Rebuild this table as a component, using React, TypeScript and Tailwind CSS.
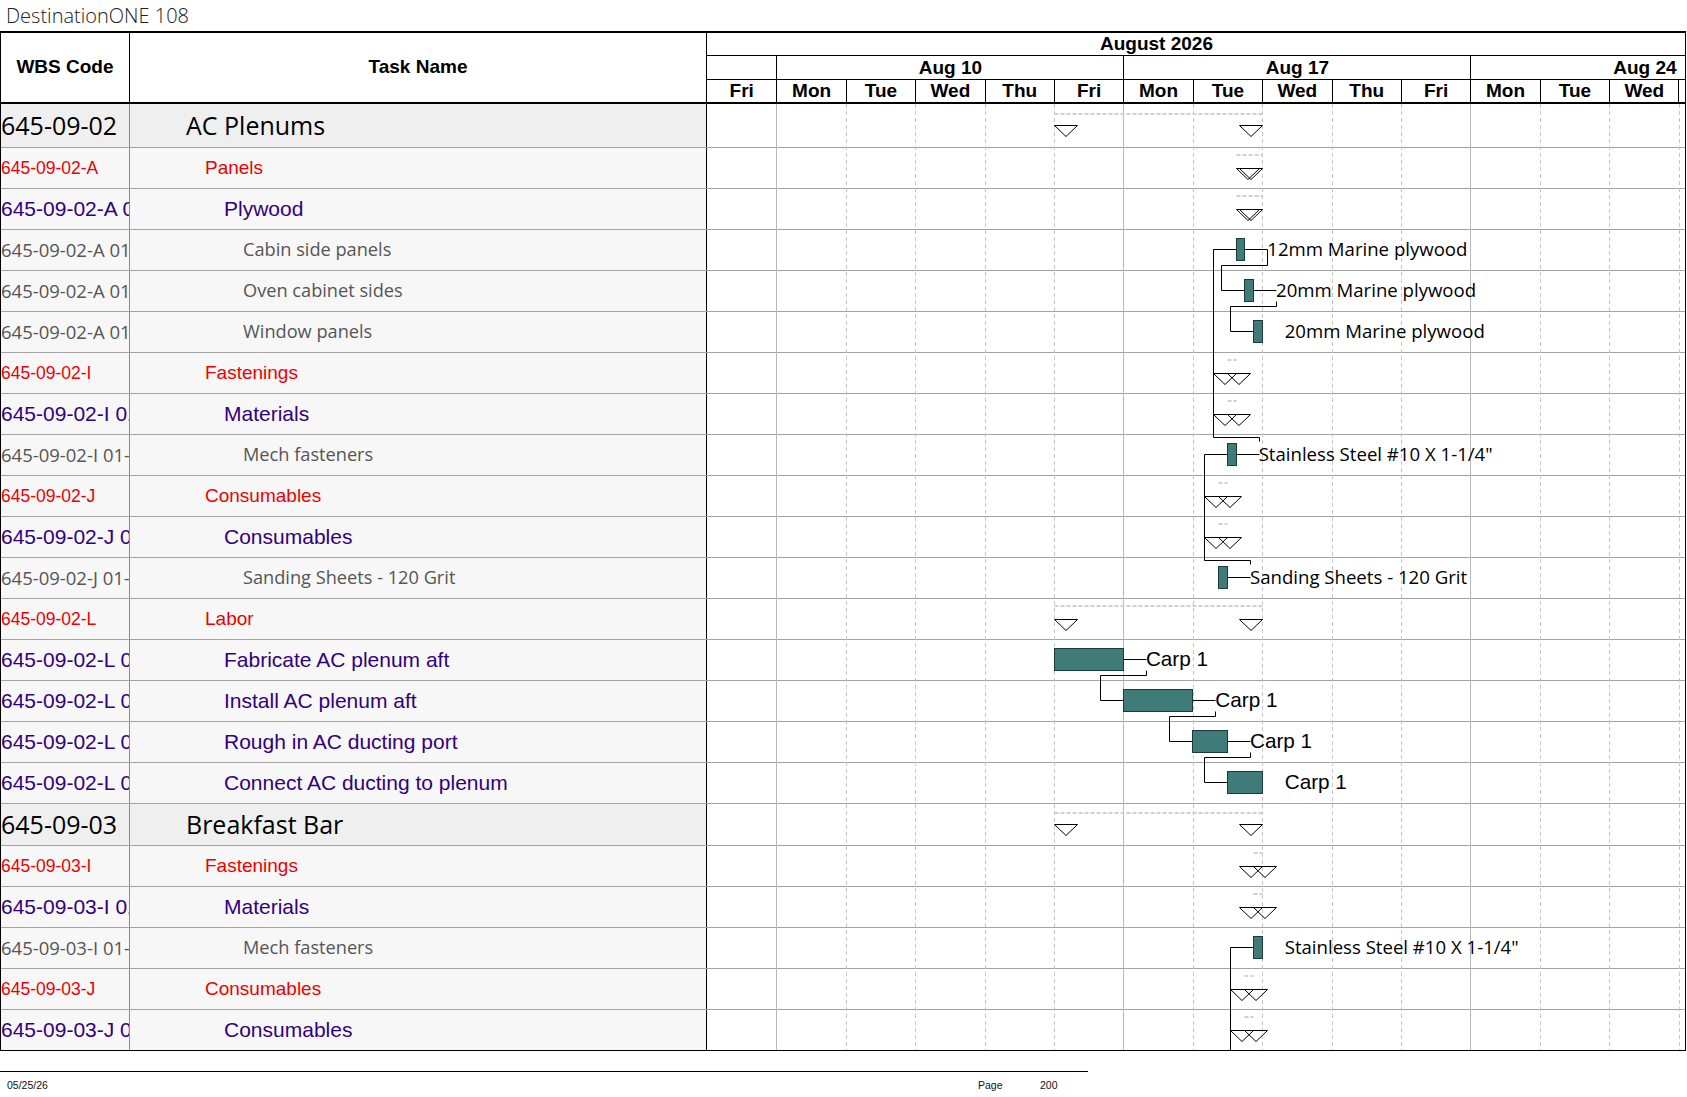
import React from 'react';

const D = 69.4;
const X = (k: number) => 706.5 + D * k;

type Kind = 'group' | 'red' | 'purple' | 'gray';
const ROWS: [string, string, Kind][] = [
  ['645-09-02', 'AC Plenums', 'group'],
  ['645-09-02-A', 'Panels', 'red'],
  ['645-09-02-A 01', 'Plywood', 'purple'],
  ['645-09-02-A 01-01', 'Cabin side panels', 'gray'],
  ['645-09-02-A 01-02', 'Oven cabinet sides', 'gray'],
  ['645-09-02-A 01-03', 'Window panels', 'gray'],
  ['645-09-02-I', 'Fastenings', 'red'],
  ['645-09-02-I 01', 'Materials', 'purple'],
  ['645-09-02-I 01-01', 'Mech fasteners', 'gray'],
  ['645-09-02-J', 'Consumables', 'red'],
  ['645-09-02-J 01', 'Consumables', 'purple'],
  ['645-09-02-J 01-01', 'Sanding Sheets - 120 Grit', 'gray'],
  ['645-09-02-L', 'Labor', 'red'],
  ['645-09-02-L 01', 'Fabricate AC plenum aft', 'purple'],
  ['645-09-02-L 02', 'Install AC plenum aft', 'purple'],
  ['645-09-02-L 03', 'Rough in AC ducting port', 'purple'],
  ['645-09-02-L 04', 'Connect AC ducting to plenum', 'purple'],
  ['645-09-03', 'Breakfast Bar', 'group'],
  ['645-09-03-I', 'Fastenings', 'red'],
  ['645-09-03-I 01', 'Materials', 'purple'],
  ['645-09-03-I 01-01', 'Mech fasteners', 'gray'],
  ['645-09-03-J', 'Consumables', 'red'],
  ['645-09-03-J 01', 'Consumables', 'purple'],
];

const WBS_CLS: Record<Kind, string> = {
  group: "font-['Open_Sans',sans-serif] text-[25px] text-black bg-[#efefef]",
  red: "font-['Liberation_Sans',Arial,sans-serif] text-[17.5px] text-[#ee0000] bg-[#f7f7f7]",
  purple: "font-['Liberation_Sans',Arial,sans-serif] text-[21px] text-[#330080] bg-[#f7f7f7]",
  gray: "font-['Open_Sans',sans-serif] text-[18.5px] text-[#555555] bg-[#f7f7f7]",
};
const TASK_CLS: Record<Kind, string> = {
  group: "font-['Open_Sans',sans-serif] text-[25px] text-black bg-[#efefef] pl-[56px]",
  red: "font-['Liberation_Sans',Arial,sans-serif] text-[19px] text-[#ee0000] bg-[#f7f7f7] pl-[75px]",
  purple: "font-['Liberation_Sans',Arial,sans-serif] text-[21px] text-[#330080] bg-[#f7f7f7] pl-[94px]",
  gray: "font-['Open_Sans',sans-serif] text-[18.2px] text-[#555555] bg-[#f7f7f7] pl-[113px]",
};

const rowTop = (i: number) =>
  i === 0 ? 104 : i <= 16 ? 147 + 41 * (i - 1) : i === 17 ? 803 : 845 + 41 * (i - 18);
const cy = (i: number) => rowTop(i) + 20;
const r = (v: number) => Math.round(v) + 0.5;

const DAYS = ['Fri', 'Mon', 'Tue', 'Wed', 'Thu', 'Fri', 'Mon', 'Tue', 'Wed', 'Thu', 'Fri', 'Mon', 'Tue', 'Wed'];

const BARS: [number, number, number][] = [
  [3, 7.625, 7.75],
  [4, 7.75, 7.875],
  [5, 7.875, 8],
  [8, 7.5, 7.625],
  [11, 7.375, 7.5],
  [13, 5, 6],
  [14, 6, 7],
  [15, 7, 7.5],
  [16, 7.5, 8],
  [20, 7.875, 8],
];

const LABELS: [number, number, string, 'os' | 'ar'][] = [
  [3, 7.75, '12mm Marine plywood', 'os'],
  [4, 7.875, '20mm Marine plywood', 'os'],
  [5, 8, '20mm Marine plywood', 'os'],
  [8, 7.625, 'Stainless Steel #10 X 1-1/4"', 'os'],
  [11, 7.5, 'Sanding Sheets - 120 Grit', 'os'],
  [13, 6, 'Carp 1', 'ar'],
  [14, 7, 'Carp 1', 'ar'],
  [15, 7.5, 'Carp 1', 'ar'],
  [16, 8, 'Carp 1', 'ar'],
  [20, 8, 'Stainless Steel #10 X 1-1/4"', 'os'],
];

const SUMS: [number, number, number][] = [
  [0, 5, 8],
  [1, 7.625, 8],
  [2, 7.625, 8],
  [6, 7.5, 7.625],
  [7, 7.5, 7.625],
  [9, 7.375, 7.5],
  [10, 7.375, 7.5],
  [12, 5, 8],
  [17, 5, 8],
  [18, 7.875, 8],
  [19, 7.875, 8],
  [21, 7.75, 7.875],
  [22, 7.75, 7.875],
];

function Poly({ pts }: { pts: [number, number][] }) {
  return (
    <polyline
      points={pts.map(([x, y]) => `${r(x)},${r(y)}`).join(' ')}
      fill="none"
      stroke="#000"
      strokeWidth={1}
    />
  );
}

function Gantt() {
  const barOf = (row: number) => BARS.find((b) => b[0] === row)!;
  const links: React.ReactNode[] = [];
  const down: [number, number][] = [
    [3, 4],
    [4, 5],
    [13, 14],
    [14, 15],
    [15, 16],
  ];
  down.forEach(([p, q], idx) => {
    const xe = X(barOf(p)[2]);
    const xs = X(barOf(q)[1]);
    const lx = xe + 23;
    const t = rowTop(p);
    links.push(<Poly key={`d1${idx}`} pts={[[xe, cy(p)], [lx, cy(p)]]} />);
    links.push(
      <Poly
        key={`d2${idx}`}
        pts={[
          [lx, p === 3 ? cy(p) : t + 31],
          [lx, t + 36],
          [xs - 23, t + 36],
          [xs - 23, cy(q)],
          [xs, cy(q)],
        ]}
      />
    );
  });
  const up: [number, number][] = [
    [8, 3],
    [11, 8],
  ];
  up.forEach(([p, q], idx) => {
    const xe = X(barOf(p)[2]);
    const xs = X(barOf(q)[1]);
    const lx = xe + 23;
    const t = rowTop(p);
    links.push(<Poly key={`u1${idx}`} pts={[[xe, cy(p)], [lx, cy(p)]]} />);
    links.push(
      <Poly
        key={`u2${idx}`}
        pts={[
          [lx, t + 7],
          [lx, t + 3],
          [xs - 23, t + 3],
          [xs - 23, cy(q)],
          [xs, cy(q)],
        ]}
      />
    );
  });
  const xs20 = X(7.875);
  links.push(
    <Poly key="in20" pts={[[xs20 - 23, 1050], [xs20 - 23, cy(20)], [xs20, cy(20)]]} />
  );

  return (
    <svg
      className="absolute left-[706px] top-0 pointer-events-none"
      width={978}
      height={946}
      viewBox="707 104 978 946"
    >
      {Array.from({ length: 14 }, (_, i) => i + 1).map((k) => {
        const x = r(X(k) + 0.5);
        const mon = k === 1 || k === 6 || k === 11;
        return (
          <line
            key={k}
            x1={x}
            x2={x}
            y1={104}
            y2={1050}
            stroke={mon ? '#b8b8b8' : '#c6c6c6'}
            strokeWidth={1}
            strokeDasharray={mon ? undefined : '4 3'}
          />
        );
      })}
      {SUMS.map(([row, ks, ke]) => {
        const t = rowTop(row);
        const s = Math.round(X(ks)) + 0.5;
        const e = Math.round(X(ke)) + 0.5;
        const dy = row === 0 || row === 17 ? t + 10 : t + 8;
        const ty = t + 21.5;
        return (
          <g key={`s${row}`}>
            <line x1={s} x2={e} y1={dy} y2={dy} stroke="#d0d0d0" strokeWidth={2} strokeDasharray="4 2" />
            <polygon
              points={`${s},${ty} ${s + 23},${ty} ${s + 11.5},${ty + 11}`}
              fill="none"
              stroke="#000"
              strokeWidth={1}
            />
            <polygon
              points={`${e - 23},${ty} ${e},${ty} ${e - 11.5},${ty + 11}`}
              fill="none"
              stroke="#000"
              strokeWidth={1}
            />
          </g>
        );
      })}
      {links}
      {BARS.map(([row, ks, ke]) => {
        const x1 = Math.round(X(ks));
        const x2 = Math.round(X(ke));
        return (
          <rect
            key={`b${row}`}
            x={x1 + 0.5}
            y={rowTop(row) + 9.5}
            width={x2 - x1}
            height={22}
            fill="#3e7b79"
            stroke="#1d3a3a"
            strokeWidth={1}
          />
        );
      })}
      {LABELS.map(([row, ke, text, f]) => (
        <text
          key={`l${row}`}
          x={X(ke) + 23}
          y={cy(row) + 7}
          fontSize={f === 'os' ? 18.6 : 20.7}
          fill="#000"
          style={{
            fontFamily: f === 'os' ? "'Open Sans', sans-serif" : "'Liberation Sans', Arial, sans-serif",
          }}
        >
          {text}
        </text>
      ))}
    </svg>
  );
}

export default function App() {
  return (
    <div className="w-[1687px] h-[1097px] bg-white overflow-hidden relative font-['Liberation_Sans',Arial,sans-serif]">
      <div className="h-[31px] pl-[6px] flex items-center font-['Open_Sans',sans-serif] font-light text-[20px] text-[#222]">
        DestinationONE 108
      </div>
      <div className="w-[1686px] border-t-2 border-l border-r border-b border-black">
        {/* Header */}
        <div className="flex h-[71px]">
          <div className="w-[129px] border-r border-b-2 border-black flex items-center justify-center font-bold text-[19px] text-black">
            WBS Code
          </div>
          <div className="w-[577px] border-r border-b-2 border-black flex items-center justify-center font-bold text-[19px] text-black">
            Task Name
          </div>
          <div className="flex-1 flex flex-col">
            <div className="h-[22px] flex items-center pl-[393px] font-bold text-[19px] leading-[22px] text-black">
              August 2026
            </div>
            <div className="h-[24px] border-t border-black grid grid-cols-[69.4px_347px_347px_1fr] font-bold text-[19px] leading-[23px] text-black">
              <div />
              <div className="border-l border-black text-center">Aug 10</div>
              <div className="border-l border-black text-center">Aug 17</div>
              <div className="border-l border-black overflow-hidden">
                <div className="w-[347px] text-center">Aug 24</div>
              </div>
            </div>
            <div className="h-[25px] border-t border-b-2 border-black grid grid-cols-[repeat(14,69.4px)_1fr] font-bold text-[19px] leading-[22px] text-black">
              {DAYS.map((d, i) => (
                <div key={i} className={i === 0 ? 'text-center' : 'text-center border-l border-black'}>
                  {d}
                </div>
              ))}
              <div className="border-l border-black" />
            </div>
          </div>
        </div>
        {/* Body */}
        <div className="relative">
          {ROWS.map(([wbs, name, kind], i) => (
            <div
              key={i}
              className={
                i === 0
                  ? 'flex h-[43px]'
                  : i === 17
                  ? 'flex h-[42px] border-t border-[#a3a3a3]'
                  : 'flex h-[41px] border-t border-[#a3a3a3]'
              }
            >
              <div
                className={`w-[129px] border-r border-[#8c8c8c] flex items-center whitespace-nowrap overflow-hidden ${WBS_CLS[kind]}`}
              >
                {wbs}
              </div>
              <div
                className={`w-[577px] border-r border-black flex items-center whitespace-nowrap overflow-hidden ${TASK_CLS[kind]}`}
              >
                {name}
              </div>
              <div className="flex-1 bg-white" />
            </div>
          ))}
          <Gantt />
        </div>
      </div>
      {/* Footer */}
      <div className="mt-[20px] w-[1088px] border-t border-black">
        <div className="flex pl-[7px] pt-[7px] text-[10.5px] leading-[12px] text-[#111]">
          <span className="w-[971px]">05/25/26</span>
          <span className="w-[62px]">Page</span>
          <span>200</span>
        </div>
      </div>
    </div>
  );
}
